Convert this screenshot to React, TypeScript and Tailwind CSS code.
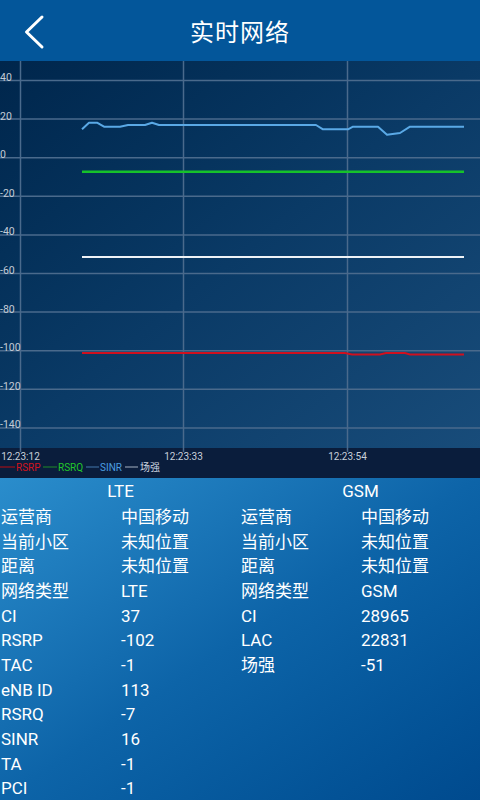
import React from "react";

// chart scale: value -> y inside the plot area (plot top at page y=61)
const yOf = (v: number) => 96.7 - 1.93 * v;
const yTicks = [40, 20, 0, -20, -40, -60, -80, -100, -120, -140];
const xGrid = [20.5, 183.5, 347.5];
const times = ["12:23:12", "12:23:33", "12:23:54"];

const toPath = (pts: [number, number][]) =>
  pts.map(([x, y], i) => `${i ? "L" : "M"}${x} ${y - 61}`).join(" ");

const sinr: [number, number][] = [
  [82, 129.3], [89, 122.7], [97, 122.7], [104, 126.7], [120, 126.7],
  [128, 125], [145, 125], [152, 122.7], [159, 125], [316, 125],
  [323, 129.3], [348, 129.3], [353, 126.7], [378, 126.7], [387, 134.7],
  [400, 133], [410, 126.7], [464, 126.7],
];
const rsrp: [number, number][] = [
  [82, 353], [345, 353], [352, 354.5], [380, 354.5], [386, 353],
  [405, 353], [410, 354.5], [464, 354.5],
];

const lte: [string, string][] = [
  ["运营商", "中国移动"],
  ["当前小区", "未知位置"],
  ["距离", "未知位置"],
  ["网络类型", "LTE"],
  ["CI", "37"],
  ["RSRP", "-102"],
  ["TAC", "-1"],
  ["eNB ID", "113"],
  ["RSRQ", "-7"],
  ["SINR", "16"],
  ["TA", "-1"],
  ["PCI", "-1"],
];
const gsm: [string, string][] = [
  ["运营商", "中国移动"],
  ["当前小区", "未知位置"],
  ["距离", "未知位置"],
  ["网络类型", "GSM"],
  ["CI", "28965"],
  ["LAC", "22831"],
  ["场强", "-51"],
];

const font = { fontFamily: "Roboto, 'Noto Sans CJK SC', sans-serif" };

function InfoColumn({ title, rows }: { title: string; rows: [string, string][] }) {
  return (
    <div className="w-[240px] pl-[1px]">
      <div className="h-[27px] flex items-center justify-center text-[17px]">{title}</div>
      {rows.map(([k, v]) => (
        <div key={k} className="flex h-[24.7px] items-center text-[17px] leading-none">
          <span className="w-[120px] shrink-0">{k}</span>
          <span>{v}</span>
        </div>
      ))}
    </div>
  );
}

export default function App() {
  return (
    <div className="w-[480px] h-[800px] overflow-hidden flex flex-col text-white" style={font}>
      {/* top bar */}
      <div className="h-[61px] shrink-0 bg-[#03569a] flex items-center relative">
        <svg width="60" height="61" viewBox="0 0 60 61" className="absolute left-0 top-0">
          <polyline points="42,17 26.5,32 42,47" fill="none" stroke="#fff" strokeWidth="3" strokeLinecap="round" strokeLinejoin="round" />
        </svg>
        <div className="flex-1 text-center text-[24px] tracking-[1px]" style={{ fontFamily: "'Noto Sans CJK SC', sans-serif" }}>
          实时网络
        </div>
      </div>

      {/* chart */}
      <div className="h-[387px] shrink-0 bg-gradient-to-br from-[#00264c] via-[#0a3a66] to-[#184c7a]">
        <svg width="480" height="387" viewBox="0 0 480 387" className="block">
          {yTicks.map((v) => (
            <line key={v} x1="0" x2="480" y1={yOf(v)} y2={yOf(v)} stroke="#4a6a8c" strokeWidth="1.5" />
          ))}
          {xGrid.map((x) => (
            <line key={x} x1={x} x2={x} y1="0" y2="387" stroke="#4a6a8c" strokeWidth="1.5" />
          ))}
          {yTicks.map((v) => (
            <text key={"t" + v} x="0" y={yOf(v) + 0.5} fontSize="10.5" fill="#c4ccd6" style={font}>
              {v}
            </text>
          ))}
          <path d={toPath(sinr)} fill="none" stroke="#5aa9e6" strokeWidth="2" strokeLinejoin="round" />
          <line x1="82" x2="464" y1="110.7" y2="110.7" stroke="#16c22a" strokeWidth="2.5" />
          <line x1="82" x2="464" y1="196" y2="196" stroke="#eef2f6" strokeWidth="2" />
          <path d={toPath(rsrp)} fill="none" stroke="#d0101e" strokeWidth="2" />
        </svg>
      </div>

      {/* time axis + legend */}
      <div className="h-[30px] shrink-0 bg-[#0a1d3c]">
        <svg width="480" height="30" viewBox="0 0 480 30" className="block">
          {xGrid.map((x, i) => (
            <g key={x}>
              <line x1={x} x2={x} y1="0" y2="4" stroke="#4a6a8c" strokeWidth="1.5" />
              <text x={x} y="12" textAnchor="middle" fontSize="10" fill="#c8d0da" style={font}>
                {times[i]}
              </text>
            </g>
          ))}
          <g fontSize="10" style={font}>
            <line x1="0" x2="15" y1="19" y2="19" stroke="#a01018" strokeWidth="1.2" />
            <text x="16" y="22.5" fill="#d2141e">RSRP</text>
            <line x1="43" x2="57" y1="19" y2="19" stroke="#1c7a2c" strokeWidth="1.2" />
            <text x="58" y="22.5" fill="#22c82a">RSRQ</text>
            <line x1="86" x2="99" y1="19" y2="19" stroke="#3a6a9a" strokeWidth="1.2" />
            <text x="100" y="22.5" fill="#4a9ee0">SINR</text>
            <line x1="125" x2="138" y1="19" y2="19" stroke="#8a9aac" strokeWidth="1.2" />
            <text x="140" y="22.5" fill="#d0d8e2">场强</text>
          </g>
        </svg>
      </div>

      {/* info */}
      <div className="flex-1 flex bg-gradient-to-br from-[#2a8dcc] via-[#0d64a8] to-[#004a8e]">
        <InfoColumn title="LTE" rows={lte} />
        <InfoColumn title="GSM" rows={gsm} />
      </div>
    </div>
  );
}
